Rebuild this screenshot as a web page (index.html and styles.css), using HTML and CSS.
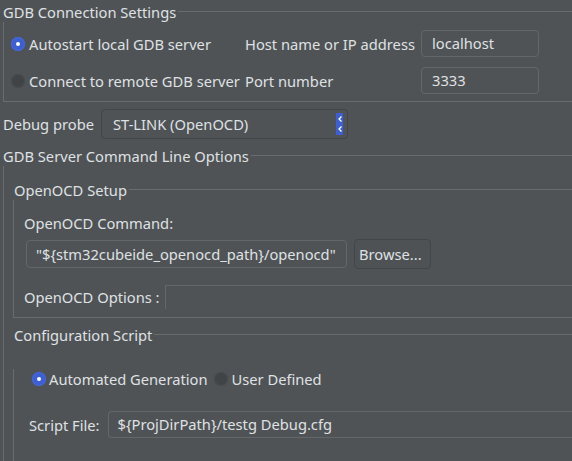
FILE: index.html
```html
<!DOCTYPE html>
<html>
<head>
<meta charset="utf-8">
<link rel="stylesheet" href="styles.css">
</head>
<body>
<div class="page">
  <section class="group g1">
    <div class="group-title"><span>GDB Connection Settings</span></div>
    <div class="group-body conn">
      <label class="radio"><span class="dot on"></span>Autostart local GDB server</label>
      <span class="lbl">Host name or IP address</span>
      <div class="input">localhost</div>
      <label class="radio"><span class="dot"></span>Connect to remote GDB server</label>
      <span class="lbl">Port number</span>
      <div class="input">3333</div>
    </div>
  </section>

  <div class="probe-row">
    <span class="probe-lbl">Debug probe</span>
    <div class="select">
      <span>ST-LINK (OpenOCD)</span>
      <span class="spin"><svg width="7" height="22" viewBox="0 0 7 22"><path d="M5.5 3.5 L3 6 L5.5 8.5 M5.5 13.5 L3 16 L5.5 18.5" stroke="#fff" stroke-width="1.3" fill="none"/></svg></span>
    </div>
  </div>

  <section class="group g2">
    <div class="group-title"><span>GDB Server Command Line Options</span></div>
    <div class="group-body open">
      <section class="group sub setup">
        <div class="group-title"><span>OpenOCD Setup</span></div>
        <div class="group-body setup-body">
          <div class="cmd-lbl">OpenOCD Command:</div>
          <div class="cmd-row">
            <div class="input cmd">"${stm32cubeide_openocd_path}/openocd"</div>
            <div class="button">Browse...</div>
          </div>
          <div class="opt-row">
            <span>OpenOCD Options :</span>
            <div class="opt-input"></div>
          </div>
        </div>
      </section>
      <section class="group sub cfg">
        <div class="group-title"><span>Configuration Script</span></div>
        <div class="group-body cfg-body">
          <div class="radios">
            <label class="radio"><span class="dot on"></span>Automated Generation</label>
            <label class="radio"><span class="dot"></span>User Defined</label>
          </div>
          <div class="file-row">
            <span>Script File:</span>
            <div class="input file">${ProjDirPath}/testg Debug.cfg</div>
          </div>
        </div>
      </section>
    </div>
  </section>
</div>
</body>
</html>
```
FILE: styles.css
```css
html, body {
  margin: 0;
  padding: 0;
  background: #505356;
  width: 572px;
  height: 461px;
  overflow: hidden;
}
body {
  font-family: "Noto Sans", "Open Sans", sans-serif;
  font-size: 14.7px;
  color: #dfe1e3;
}
.page {
  padding: 2px 0 0 3px;
}
.group-title {
  display: flex;
  align-items: center;
  height: 20px;
  line-height: 20px;
  white-space: nowrap;
}
.group-title::after {
  content: "";
  flex: 1;
  border-top: 1px solid #686c6f;
  margin-top: -1px;
  margin-left: 2px;
}
.group-body {
  border-left: 1px solid #686c6f;
  border-bottom: 1px solid #686c6f;
}
.conn {
  display: grid;
  grid-template-columns: 234px 176px 118px;
  grid-auto-rows: 27px;
  row-gap: 10px;
  align-items: center;
  padding: 8px 0 7px 7px;
}
.radio {
  display: flex;
  align-items: center;
  white-space: nowrap;
}
.dot {
  width: 14px;
  height: 14px;
  border-radius: 50%;
  background: #414447;
  box-shadow: inset 0 0 0 1px #4a4d50;
  margin-right: 4px;
  flex: none;
  position: relative;
}
.dot.on {
  background: #3c5fd3;
  box-shadow: inset 0 0 0 1px #4468dc;
}
.dot.on::after {
  content: "";
  position: absolute;
  left: 5px;
  top: 5px;
  width: 4px;
  height: 4px;
  border-radius: 50%;
  background: #fff;
}
.input {
  box-sizing: border-box;
  height: 27px;
  border: 1px solid #636769;
  border-radius: 4px;
  padding: 0 10px;
  line-height: 25px;
  white-space: nowrap;
  overflow: hidden;
}
.probe-row {
  display: flex;
  align-items: center;
  margin-top: 7px;
  height: 30px;
}
.probe-lbl {
  width: 98px;
}
.select {
  box-sizing: border-box;
  width: 247px;
  height: 30px;
  border: 1px solid #434649;
  border-radius: 4px;
  display: flex;
  align-items: center;
  padding: 0 4px 0 11px;
}
.select span:first-child {
  flex: 1;
}
.spin {
  width: 7px;
  height: 22px;
  background: #3c5fd3;
  display: block;
}
.spin svg {
  display: block;
}
.g2 {
  margin-top: 7px;
}
.g2 > .group-body {
  border-bottom: none;
  padding: 14px 0 0 9px;
  height: 281px;
}
.sub .group-title span {
  padding-left: 1px;
}
.setup-body {
  padding: 13px 0 0 10px;
  height: 104px;
}
.cmd-lbl {
  line-height: 20px;
}
.cmd-row {
  display: flex;
  align-items: center;
  gap: 7px;
  margin-top: 6px;
  margin-left: 2px;
}
.cmd {
  width: 321px;
  height: 28px;
  line-height: 26px;
  padding: 0 0 0 9px;
}
.button {
  box-sizing: border-box;
  height: 30px;
  width: 77px;
  border: 1px solid #434649;
  border-radius: 4px;
  line-height: 28px;
  padding-left: 4px;
  background: #4e5255;
  white-space: nowrap;
}
.opt-row {
  display: flex;
  align-items: center;
  margin-top: 16px;
  gap: 5px;
}
.opt-input {
  flex: 1;
  height: 23px;
  border-top: 1px solid #63676a;
  border-left: 1px solid #63676a;
}
.cfg {
  margin-top: 7px;
}
.cfg-body {
  height: 110px;
  padding: 0 0 0 18px;
}
.radios {
  display: flex;
  gap: 7px;
  margin-top: 24px;
  align-items: center;
  height: 20px;
}
.radios .dot {
  margin-right: 3px;
}
.file-row {
  display: flex;
  align-items: center;
  margin-top: 22px;
  margin-left: -3px;
  gap: 8px;
}
.file {
  flex: 1;
  height: 27px;
  padding-left: 9px;
  border-right: none;
  border-radius: 4px 0 0 4px;
}
```
